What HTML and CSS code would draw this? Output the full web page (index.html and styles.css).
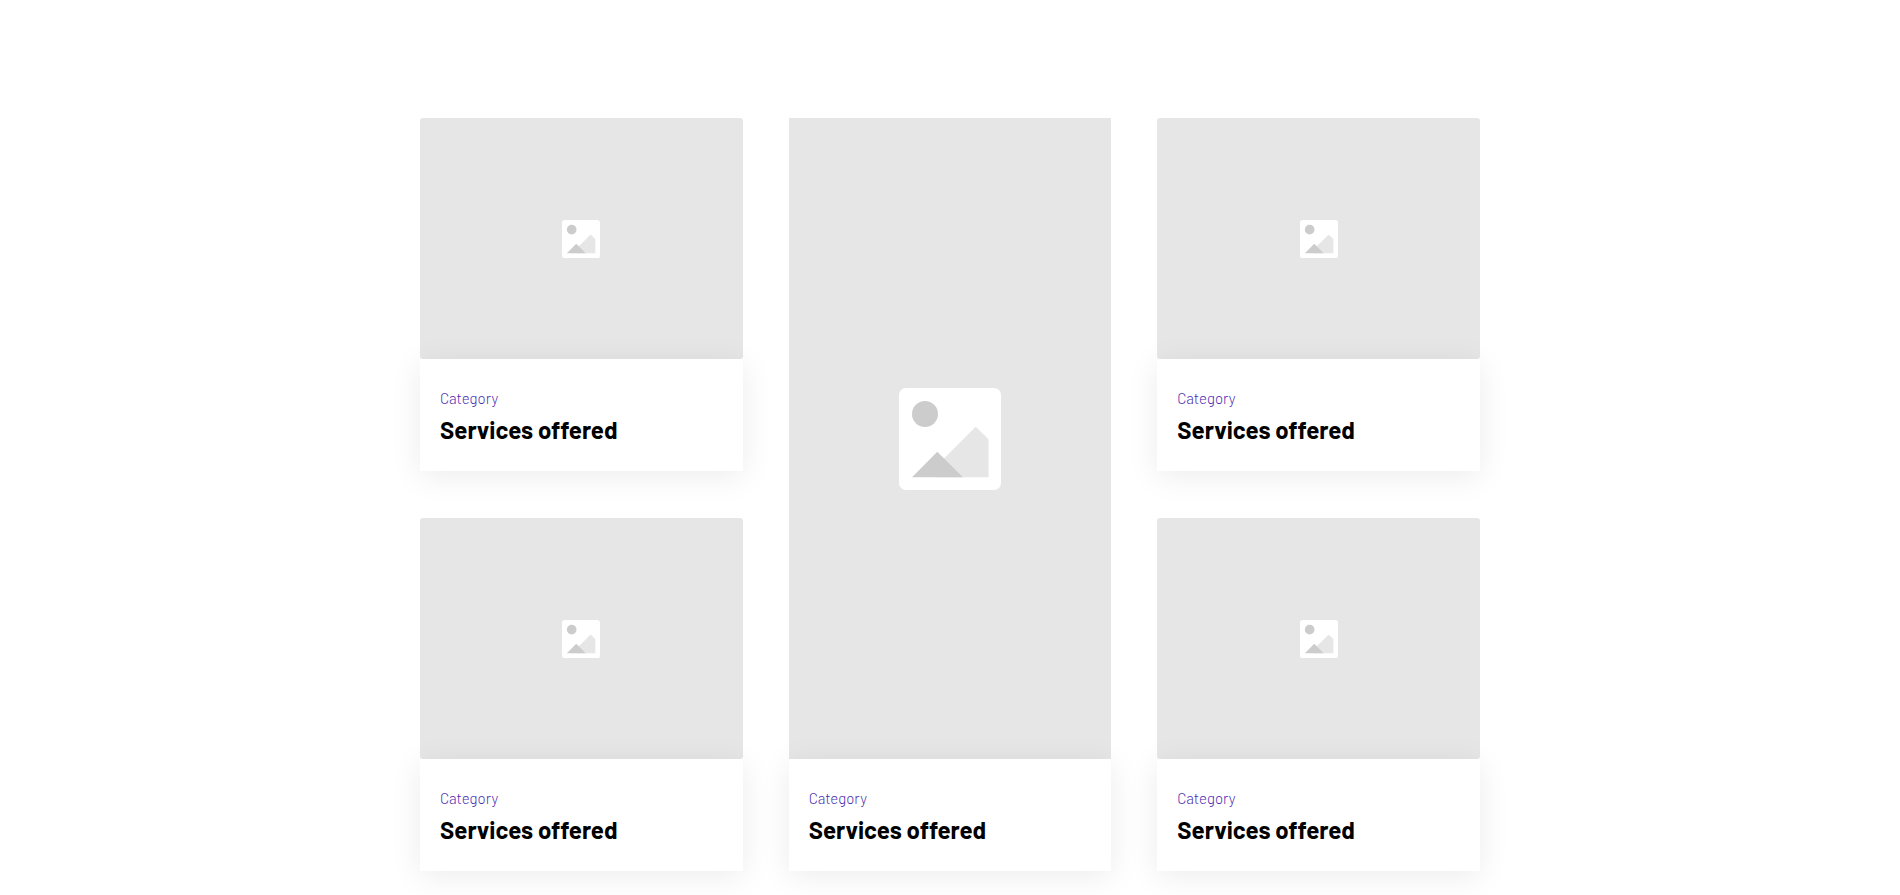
FILE: index.html
```html
<!DOCTYPE html>
<html lang="en">
<head>
    <meta charset="utf-8">
    <meta name="viewport" content="width=device-width, initial-scale=1">
    <title>Services</title>
    <link rel="stylesheet" href="styles.css">
</head>
<body>
    <!-- placeholder picture, shared by all cards -->
    <svg class="sprite" aria-hidden="true">
        <symbol id="placeholder" viewBox="0 0 102 102">
            <rect width="102" height="102" rx="7" fill="#fff"/>
            <circle cx="26" cy="26" r="13" fill="#ccc"/>
            <path d="M38.5 77 76.8 38.7 89.5 51.2V89.3H38.5z" fill="#e6e6e6"/>
            <path d="M13 89.3 38.3 63.8 63.8 89.3z" fill="#ccc"/>
        </symbol>
    </svg>

    <main class="services">
        <article class="card">
            <div class="card-image">
                <svg class="icon" aria-hidden="true"><use href="#placeholder"/></svg>
            </div>
            <div class="card-body">
                <p class="category">Category</p>
                <h3 class="title">Services offered</h3>
            </div>
        </article>
        <article class="card card-tall">
            <div class="card-image">
                <svg class="icon" aria-hidden="true"><use href="#placeholder"/></svg>
            </div>
            <div class="card-body">
                <p class="category">Category</p>
                <h3 class="title">Services offered</h3>
            </div>
        </article>
        <article class="card">
            <div class="card-image">
                <svg class="icon" aria-hidden="true"><use href="#placeholder"/></svg>
            </div>
            <div class="card-body">
                <p class="category">Category</p>
                <h3 class="title">Services offered</h3>
            </div>
        </article>
        <article class="card">
            <div class="card-image">
                <svg class="icon" aria-hidden="true"><use href="#placeholder"/></svg>
            </div>
            <div class="card-body">
                <p class="category">Category</p>
                <h3 class="title">Services offered</h3>
            </div>
        </article>
        <article class="card">
            <div class="card-image">
                <svg class="icon" aria-hidden="true"><use href="#placeholder"/></svg>
            </div>
            <div class="card-body">
                <p class="category">Category</p>
                <h3 class="title">Services offered</h3>
            </div>
        </article>
    </main>
</body>
</html>
```
FILE: styles.css
```css
* {
    box-sizing: border-box;
}
body {
    margin: 0;
    background: #fff;
    color: #000;
    font-family: Barlow, Roboto, sans-serif;
}
.sprite {
    display: none;
}
.services {
    display: grid;
    grid-template-columns: repeat(3, 1fr);
    gap: 47px 46px;
    max-width: 1100px;
    margin: 0 auto;
    padding: 118px 20px 24px;
}
.card {
    display: flex;
    flex-direction: column;
}
.card-tall {
    grid-row: span 2;
}
.card-image {
    display: flex;
    flex: 1;
    align-items: center;
    justify-content: center;
    min-height: 241px;
    border-radius: 3px;
    background: #e6e6e6;
}
.card-tall .card-image {
    border-radius: 0;
}
.icon {
    width: 38px;
    height: 38px;
}
.card-tall .icon {
    width: 102px;
    height: 102px;
}
.card-body {
    padding: 29px 20px 25px;
    background: #fff;
    box-shadow: 0 5px 30px rgba(0, 0, 0, 0.08);
}
.category {
    margin: 0 0 6px;
    color: #4a2bb0;
    font-size: 15px;
    font-weight: 300;
    line-height: 20px;
}
.title {
    margin: 0;
    font-size: 24px;
    font-weight: 700;
    line-height: 32px;
}
@media (max-width: 800px) {
    .services {
        grid-template-columns: 1fr;
        padding-top: 40px;
    }
    .card-tall {
        grid-row: auto;
    }
}
```
